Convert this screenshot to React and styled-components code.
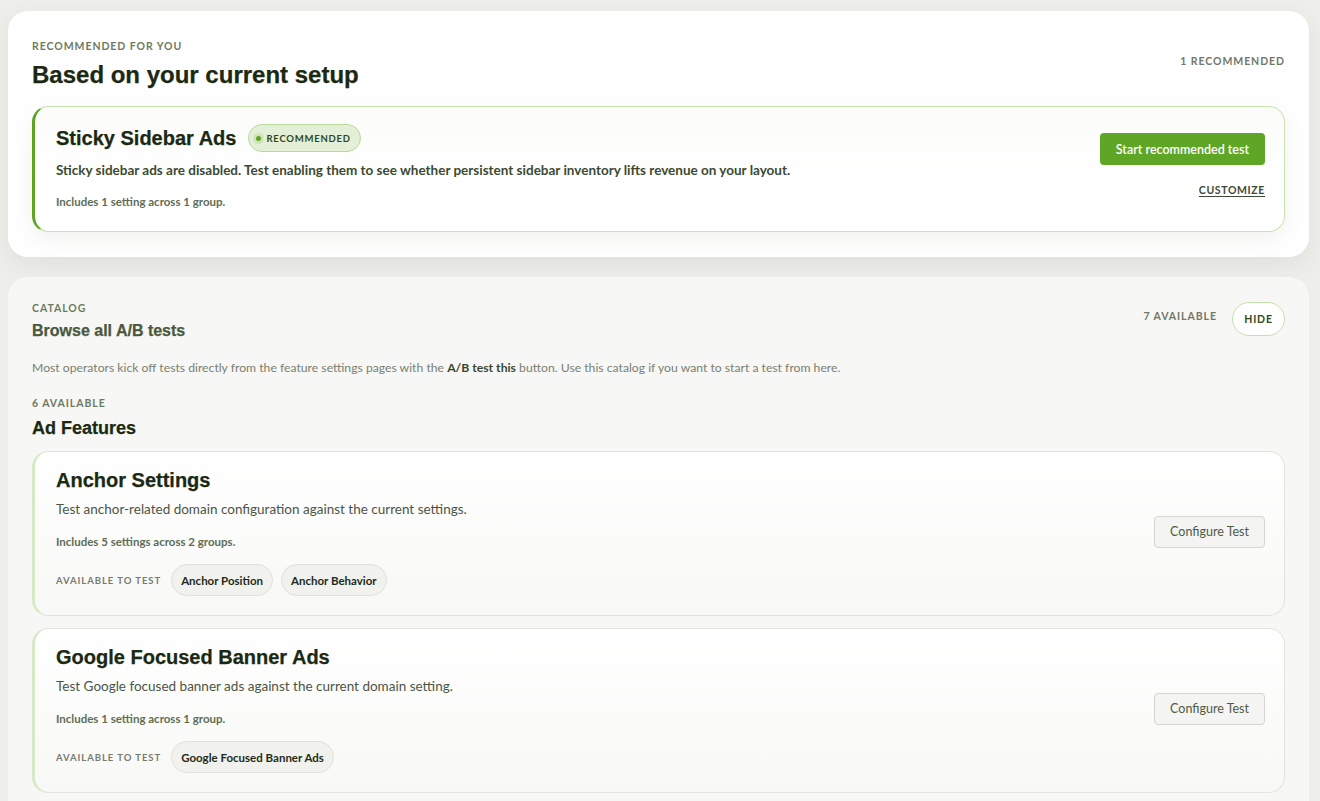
import styled, { createGlobalStyle } from 'styled-components';

const GlobalStyle = createGlobalStyle`
  body {
    margin: 0;
    background: #eeefeb;
    font-family: Lato, "Noto Sans", sans-serif;
    color: #1d2a15;
  }
`;

const features = [
  {
    title: 'Anchor Settings',
    desc: 'Test anchor-related domain configuration against the current settings.',
    includes: 'Includes 5 settings across 2 groups.',
    chips: ['Anchor Position', 'Anchor Behavior'],
  },
  {
    title: 'Google Focused Banner Ads',
    desc: 'Test Google focused banner ads against the current domain setting.',
    includes: 'Includes 1 setting across 1 group.',
    chips: ['Google Focused Banner Ads'],
  },
];

export default function App() {
  return (
    <>
      <GlobalStyle />
      <Page>
        <Panel>
          <PanelHead>
            <div>
              <Eyebrow>Recommended for you</Eyebrow>
              <BigTitle>Based on your current setup</BigTitle>
            </div>
            <Count>1 recommended</Count>
          </PanelHead>
          <RecCard>
            <CardMain>
              <TitleRow>
                <CardTitle>Sticky Sidebar Ads</CardTitle>
                <Badge>
                  <Dot />
                  Recommended
                </Badge>
              </TitleRow>
              <RecDesc>
                Sticky sidebar ads are disabled. Test enabling them to see whether persistent sidebar
                inventory lifts revenue on your layout.
              </RecDesc>
              <Includes $top={13}>Includes 1 setting across 1 group.</Includes>
            </CardMain>
            <RecActions>
              <PrimaryButton>Start recommended test</PrimaryButton>
              <LinkButton>Customize</LinkButton>
            </RecActions>
          </RecCard>
        </Panel>

        <Catalog>
          <PanelHead>
            <div>
              <Eyebrow>Catalog</Eyebrow>
              <SubTitle>Browse all A/B tests</SubTitle>
            </div>
            <HeadRight>
              <Count>7 available</Count>
              <HideButton>Hide</HideButton>
            </HeadRight>
          </PanelHead>
          <Intro>
            Most operators kick off tests directly from the feature settings pages with the{' '}
            <strong>A/B test this</strong> button. Use this catalog if you want to start a test from here.
          </Intro>
          <Eyebrow>6 available</Eyebrow>
          <GroupTitle>Ad Features</GroupTitle>
          <List>
            {features.map((f) => (
              <FeatureCard key={f.title}>
                <CardMain>
                  <CardTitle>{f.title}</CardTitle>
                  <FeatureDesc>{f.desc}</FeatureDesc>
                  <Includes $top={14}>{f.includes}</Includes>
                  <ChipRow>
                    <ChipLabel>Available to test</ChipLabel>
                    {f.chips.map((c) => (
                      <Chip key={c}>{c}</Chip>
                    ))}
                  </ChipRow>
                </CardMain>
                <GhostButton>Configure Test</GhostButton>
              </FeatureCard>
            ))}
          </List>
        </Catalog>
      </Page>
    </>
  );
}

const Page = styled.div`
  padding: 11px 11px 0 8px;
  display: flex;
  flex-direction: column;
  gap: 20px;
`;

const Panel = styled.section`
  background: #ffffff;
  border-radius: 20px;
  padding: 27px 24px 25px;
  box-shadow: 0 8px 24px rgba(60, 70, 50, 0.08);
`;

const Catalog = styled.section`
  background: #f7f7f5;
  border-radius: 20px 20px 0 0;
  padding: 23px 24px 10px;
  min-height: 520px;
`;

const PanelHead = styled.div`
  display: flex;
  justify-content: space-between;
  align-items: center;
`;

const HeadRight = styled.div`
  display: flex;
  align-items: center;
  gap: 15px;
  margin-top: -4px;
`;

const Eyebrow = styled.div`
  font-size: 10.5px;
  line-height: 16px;
  font-weight: 700;
  letter-spacing: 0.09em;
  text-transform: uppercase;
  color: #6d7a62;
`;

const Count = styled(Eyebrow)`
  color: #6f7868;
  margin-top: -6px;
`;

const Heading = styled.div`
  font-family: "Liberation Sans", Arial, sans-serif;
  font-weight: 700;
  -webkit-text-stroke: 0.25px currentColor;
`;

const BigTitle = styled(Heading)`
  margin-top: 6px;
  font-size: 24px;
  line-height: 30px;
  color: #1b2913;
`;

const SubTitle = styled(Heading)`
  margin-top: 4px;
  font-size: 16px;
  line-height: 22px;
  color: #4a5840;
`;

const GroupTitle = styled(Heading)`
  margin: 5px 0 11px;
  font-size: 18px;
  line-height: 24px;
  color: #1b2913;
`;

const CardTitle = styled(Heading)`
  font-size: 20px;
  line-height: 26px;
  color: #1b2913;
`;

const RecCard = styled.div`
  margin-top: 16px;
  display: flex;
  align-items: flex-start;
  justify-content: space-between;
  padding: 17px 19px 20px 21px;
  border: 1px solid #c9e2b2;
  border-left: 3px solid #5da424;
  border-radius: 16px;
  background: linear-gradient(180deg, #fbfcf9 0%, #ffffff 60%);
  box-shadow: 0 8px 24px rgba(70, 90, 50, 0.08);
`;

const CardMain = styled.div`
  display: flex;
  flex-direction: column;
`;

const TitleRow = styled.div`
  display: flex;
  align-items: center;
  gap: 12px;
  height: 28px;
`;

const Badge = styled.span`
  display: inline-flex;
  align-items: center;
  gap: 5px;
  height: 26px;
  padding: 0 9px 0 7px;
  border-radius: 999px;
  background: #e3efd7;
  border: 1px solid #b9d99d;
  font-size: 9.5px;
  font-weight: 700;
  letter-spacing: 0.08em;
  text-transform: uppercase;
  color: #2d4a1c;
`;

const Dot = styled.span`
  width: 5px;
  height: 5px;
  border-radius: 50%;
  background: #5da424;
  box-shadow: 0 0 0 3px #cfe4bc;
`;

const RecDesc = styled.p`
  margin: 8px 0 0;
  font-size: 13.5px;
  line-height: 20px;
  font-weight: 700;
  color: #3b4a31;
`;

const Includes = styled.div`
  margin-top: ${(p) => p.$top}px;
  font-size: 11.5px;
  line-height: 18px;
  font-weight: 700;
  color: #5f6d55;
`;

const RecActions = styled.div`
  display: flex;
  flex-direction: column;
  align-items: flex-end;
  gap: 19px;
  padding-top: 9px;
`;

const PrimaryButton = styled.button`
  height: 32px;
  padding: 0 16px;
  border: none;
  border-radius: 4px;
  background: #5fa626;
  color: #ffffff;
  font-family: Lato, "Noto Sans", sans-serif;
  font-size: 12.5px;
  font-weight: 600;
`;

const LinkButton = styled.button`
  padding: 0;
  border: none;
  background: none;
  font-family: Lato, "Noto Sans", sans-serif;
  font-size: 10.5px;
  font-weight: 700;
  letter-spacing: 0.06em;
  text-transform: uppercase;
  text-decoration: underline;
  text-underline-offset: 2px;
  color: #3d4a35;
`;

const HideButton = styled.button`
  width: 53px;
  height: 34px;
  border-radius: 999px;
  border: 1px solid #c5e0ad;
  background: #ffffff;
  font-family: Lato, "Noto Sans", sans-serif;
  font-size: 10.5px;
  font-weight: 700;
  letter-spacing: 0.08em;
  text-transform: uppercase;
  color: #2e4a22;
`;

const Intro = styled.p`
  margin: 17px 0 18px;
  font-size: 12.2px;
  line-height: 18px;
  color: #7a8072;

  strong {
    color: #3a4632;
    font-weight: 700;
  }
`;

const List = styled.div`
  display: flex;
  flex-direction: column;
  gap: 12px;
`;

const FeatureCard = styled.div`
  display: flex;
  align-items: center;
  justify-content: space-between;
  padding: 15px 19px 19px 21px;
  border: 1px solid #e3e4df;
  border-left: 3px solid #d6e9c4;
  border-radius: 16px;
  background: linear-gradient(180deg, #ffffff 0%, #f8f8f6 100%);
`;

const FeatureDesc = styled.p`
  margin: 6px 0 0;
  font-size: 13.5px;
  line-height: 20px;
  color: #4b5545;
`;

const ChipRow = styled.div`
  display: flex;
  align-items: center;
  gap: 8px;
  margin-top: 13px;
`;

const ChipLabel = styled.span`
  margin-right: 2px;
  font-size: 9.5px;
  font-weight: 700;
  letter-spacing: 0.1em;
  text-transform: uppercase;
  color: #767c70;
`;

const Chip = styled.span`
  display: inline-flex;
  align-items: center;
  height: 32px;
  box-sizing: border-box;
  padding: 0 9px;
  border-radius: 999px;
  background: #f1f2ee;
  border: 1px solid #e0e1dc;
  font-size: 11.5px;
  font-weight: 700;
  color: #1f2a18;
`;

const GhostButton = styled.button`
  height: 32px;
  padding: 0 15px;
  border-radius: 4px;
  border: 1px solid #d5d6d1;
  background: #f4f4f2;
  font-family: Lato, "Noto Sans", sans-serif;
  font-size: 12.5px;
  color: #4e5a46;
`;
